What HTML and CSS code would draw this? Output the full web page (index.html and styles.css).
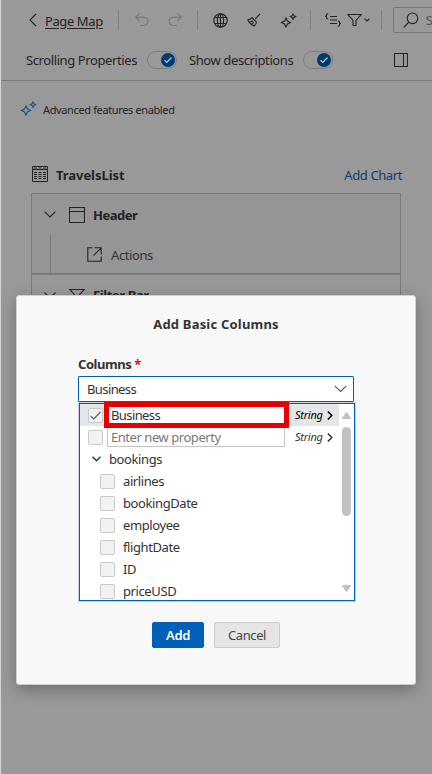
FILE: index.html
```html
<!DOCTYPE html>
<html lang="en">
<head>
<meta charset="utf-8">
<title>Page Map</title>
<link rel="stylesheet" href="styles.css">
</head>
<body>
<div class="app">
  <header class="toolbar">
    <svg class="back" width="8" height="14" viewBox="0 0 8 14"><path d="M7 1 1 7l6 6"/></svg>
    <a class="map-link">Page Map</a>
    <i class="sep"></i>
    <svg class="undo faded" width="14" height="14" viewBox="0 0 14 14"><path d="M4.5.5.8 4.2l3.7 3.7M1 4.2h7.8a3.9 3.9 0 1 1 0 8.3H5"/></svg>
    <svg class="redo faded" width="14" height="14" viewBox="0 0 14 14"><path d="m9.5.5 3.7 3.7-3.7 3.7M13 4.2H5.2a3.9 3.9 0 1 0 0 8.3H9"/></svg>
    <i class="sep sep-2"></i>
    <svg class="globe" width="15" height="15" viewBox="0 0 15 15"><circle cx="7.5" cy="7.5" r="6.7"/><ellipse cx="7.5" cy="7.5" rx="3.1" ry="6.7"/><path d="M1.500 4.500h12M1.500 10.500h12M7.500.8v13.400"/></svg>
    <svg class="broom" width="14" height="14" viewBox="0 0 14 14"><path d="M13 1 8.2 5.8M5 4.5l4.5 4.7M5 4.5C4.3 6 3 6.5.8 6.8 2 9.7 4.2 11.900 7.2 13 8 12 9.500 10.500 9.500 9.200M2.500 9l3.700-1.200M4.500 11.300l2.300-2.100"/></svg>
    <svg class="spark" width="17" height="15" viewBox="0 0 17 15"><path d="M6 5 7.500 8 10.500 9.500 7.500 11 6 14 4.500 11 1.500 9.500 4.500 8ZM13 1l.9 1.700 1.700.9-1.700.9-.9 1.700-.9-1.700-1.700-.9 1.700-.9Z"/></svg>
    <i class="sep sep-3"></i>
    <svg class="lines" width="16" height="14" viewBox="0 0 16 14"><path d="M3.200.800h-.700Q1.500.800 1.500 2v.500L.500 3.200l1 .8v.700q0 1.100 1 1.100h.700M5 3.500h7M5 7h7M5 10.500h7M12.800 8h.700q1 0 1 1.100v.800l1 .8-1 .7v.700q0 1.100-1 1.100h-.7"/></svg>
    <svg class="funnel" width="15" height="14" viewBox="0 0 15 14"><path d="M.8 1.500h13.400L9 7.500v5H6v-5Z"/></svg>
    <svg class="mini" width="6" height="4" viewBox="0 0 6 4"><path d="m.5.700 2.500 2.300L5.500.7"/></svg>
    <i class="sep sep-4"></i>
    <div class="search">
      <svg width="16" height="17" viewBox="0 0 16 17"><circle cx="9.500" cy="6.300" r="5.300"/><path d="M5.600 10.300.7 15.500"/></svg>
      <span>Search</span>
    </div>
  </header>
  <div class="options">
    <span class="opt opt-a">Scrolling Properties</span>
    <span class="toggle"><b><svg width="14" height="14" viewBox="0 0 14 14"><path d="m3.500 7.200 2.200 2.200 4.800-4.900"/></svg></b></span>
    <span class="opt opt-b">Show descriptions</span>
    <span class="toggle"><b><svg width="14" height="14" viewBox="0 0 14 14"><path d="m3.500 7.200 2.200 2.200 4.800-4.900"/></svg></b></span>
    <svg class="panel" width="14" height="14" viewBox="0 0 14 14"><path d="M.5.500h13v13H.500ZM9.500.500v13"/></svg>
  </div>
  <div class="banner">
    <svg width="17" height="15" viewBox="0 0 17 15"><path d="M6 5 7.500 8 10.500 9.500 7.500 11 6 14 4.500 11 1.500 9.500 4.500 8ZM13 1l.9 1.700 1.700.9-1.700.9-.9 1.700-.9-1.700-1.700-.9 1.700-.9Z"/></svg>
    <span>Advanced features enabled</span>
  </div>
  <div class="heading">
    <svg width="16" height="16" viewBox="0 0 16 16"><path d="M.5.500h15v15H.500ZM.5 3.500h15M2 2h3M6.500 2h3M11 2h3M2 6.500h3M6.500 6.500h3M11 6.500h3M2 8.500h3M6.500 8.500h3M11 8.500h3M2 10.500h3M6.500 10.500h3M11 10.500h3M2 12.500h3M6.500 12.500h3M11 12.500h3"/></svg>
    <strong>TravelsList</strong>
    <a class="chart">Add Chart</a>
  </div>
  <section class="tree">
    <div class="node">
      <svg width="12" height="7" viewBox="0 0 12 7"><path d="m.5.600 5.500 5.400L11.500.6"/></svg>
      <svg class="node-icon" width="16" height="16" viewBox="0 0 16 16"><path d="M.5.500h15v15H.500ZM.5 4.500h15"/></svg>
      <strong class="header-label">Header</strong>
    </div>
    <div class="child">
      <svg width="15" height="15" viewBox="0 0 15 15"><path d="M5.500.800H.800v13.400h13.400V9.500M7.500.800h6.700v6.700M14.200.800 6.700 8.300"/></svg>
      <span>Actions</span>
    </div>
    <div class="node node-2">
      <svg width="12" height="7" viewBox="0 0 12 7"><path d="m.5.600 5.500 5.400L11.500.6"/></svg>
      <svg class="node-icon" width="16" height="16" viewBox="0 0 16 16"><path d="M1 2.500h14L9.500 9v6h-3V9Z"/></svg>
      <strong class="filter-label">Filter Bar</strong>
    </div>
  </section>
</div>
<div class="dialog">
  <h1>Add Basic Columns</h1>
  <div class="label"><span>Columns</span> <em>*</em></div>
  <div class="combo"><span class="value">Business</span><svg width="13" height="8" viewBox="0 0 13 8"><path d="m.7.800 5.800 5.600L12.300.8"/></svg></div>
  <div class="list">
    <div class="rows">
      <div class="row picked">
        <i class="box"><svg width="13" height="13" viewBox="0 0 13 13"><path d="m1.500 6.800 3.200 3.200 6.800-7"/></svg></i>
        <span class="field marked"><span class="value">Business</span></span>
        <em>String</em><svg class="next" width="6" height="9" viewBox="0 0 6 9"><path d="m.8.500 4 4-4 4"/></svg>
      </div>
      <div class="row">
        <i class="box"></i>
        <span class="field"><span class="hint">Enter new property</span></span>
        <em>String</em><svg class="next" width="6" height="9" viewBox="0 0 6 9"><path d="m.8.500 4 4-4 4"/></svg>
      </div>
      <div class="row group"><svg width="9" height="6" viewBox="0 0 9 6"><path d="m.5.700 4 4 4-4"/></svg><span>bookings</span></div>
      <div class="row item"><i class="box"></i><span>airlines</span></div>
      <div class="row item"><i class="box"></i><span>bookingDate</span></div>
      <div class="row item"><i class="box"></i><span>employee</span></div>
      <div class="row item"><i class="box"></i><span>flightDate</span></div>
      <div class="row item"><i class="box"></i><span>ID</span></div>
      <div class="row item"><i class="box"></i><span>priceUSD</span></div>
    </div>
    <div class="scroll">
      <svg width="9" height="7" viewBox="0 0 9 7"><path d="M4.500 0Q5 0 9 6.200V7H0v-.800Q4 0 4.500 0Z"/></svg>
      <i class="thumb"></i>
      <svg class="down" width="9" height="7" viewBox="0 0 9 7"><path d="M4.500 7Q5 7 9 .800V0H0v.800Q4 7 4.500 7Z"/></svg>
    </div>
  </div>
  <div class="actions"><span class="btn primary">Add</span><span class="btn">Cancel</span></div>
</div>
</body>
</html>
```
FILE: styles.css
```css
* { box-sizing: border-box; }
body {
  margin: 0;
  width: 432px;
  height: 774px;
  overflow: hidden;
  position: relative;
  background: #999;
  color: #242424;
  font: 13px/18px "Noto Sans", "Open Sans", sans-serif;
  letter-spacing: -0.4px;
  white-space: nowrap;
}
svg { display: block; flex: none; fill: none; stroke: currentColor; stroke-width: 1.1; }
i { display: block; flex: none; font-style: normal; }
.app { height: 774px; border-left: 1px solid #d5d5d5; overflow: hidden; }
.toolbar { display: flex; align-items: center; height: 40px; padding-left: 28px; }
.map-link { width: 58px; margin: 2px 0 0 8px; text-decoration: underline; text-underline-offset: 2px; }
.sep { flex: none; width: 1px; height: 20px; margin-left: 15px; background: #808080; }
.faded { color: #777; }
.undo { margin-left: 16px; }
.redo { margin-left: 19px; }
.sep-2 { margin-left: 15px; }
.globe { margin-left: 15px; }
.broom { margin-left: 19px; }
.spark { margin-left: 19px; }
.sep-3 { margin-left: 13px; }
.lines { margin-left: 14px; }
.funnel { margin-left: 6px; }
.mini { margin-left: 2px; }
.sep-4 { margin-left: 11px; }
.search {
  display: flex; align-items: center; flex: none; width: 90px; height: 26px;
  margin-left: 11px; padding-left: 9px; border: 1px solid #777; border-radius: 2px;
  color: #555;
}
.search svg { color: #222; margin-right: 7px; }
.options { display: flex; align-items: center; height: 41px; padding-left: 25px; border-bottom: 1px solid #7b7b7b; }
.opt-a { width: 121px; }
.opt-b { width: 114px; margin-left: 12px; }
.toggle { flex: none; display: flex; align-items: center; justify-content: flex-end; width: 30px; height: 18px; padding-right: 1px; border: 1px solid #7c7c7c; border-radius: 9px; }
.toggle b { width: 14px; height: 14px; border-radius: 50%; background: #003b70; color: #c4cfda; }
.panel { margin-left: 61px; }
.banner { display: flex; align-items: center; height: 18px; margin: 20px 0 0 19px; font-size: 11px; letter-spacing: -.37px; }
.banner svg { color: #174f91; margin: -3px 6px 0 0; }
.heading { display: flex; align-items: center; height: 20px; margin: 46px 30px 0 31px; }
.heading strong { margin-left: 8px; letter-spacing: -.05px; }
.heading svg { stroke-width: 1; margin-top: -2px; }
.chart { margin-left: auto; color: #0b3d70; }
.tree { width: 370px; height: 420px; margin: 8px 0 0 30px; border: 1px solid #7b7b7b; background: linear-gradient(#959595 79px, #999 79px); }
.node { display: flex; align-items: center; height: 41px; padding-left: 12px; }
.header-label { letter-spacing: -.5px; }
.node-icon { margin: 0 8px 0 13px; }
.child { display: flex; align-items: center; height: 38px; padding-top: 1px; margin-left: 18px; padding-left: 36px; border-left: 1px solid #7b7b7b; color: #333; }
.child svg { margin-right: 9px; color: #222; }
.node-2 { height: 42px; border-top: 2px solid #7b7b7b; }
.dialog {
  position: absolute; left: 16px; top: 295px; width: 400px; height: 390px;
  padding: 19px 62px 0; border: 1px solid #d0d0d0; border-radius: 3px; background: #f8f8f8;
  box-shadow: 0 5px 16px rgba(0,0,0,.28); color: #333;
}
h1 { margin: 0; font-size: 13px; line-height: 18px; text-align: center; letter-spacing: .2px; }
.label { margin: 22px 0 0 -1px; height: 18px; font-weight: 700; letter-spacing: -.45px; }
.label em { color: #b3251e; font-style: normal; }
.combo { display: flex; align-items: center; justify-content: space-between; width: 276px; height: 26px; margin: 3px 0 0 -1px; padding: 0 6px 0 8px; border: 1px solid #0060b8; border-radius: 1px; background: #fff; }
.combo svg { color: #555; }
.value { letter-spacing: -.6px; }
.list { position: relative; display: flex; width: 276px; height: 198px; margin-top: 1px; border: 1px solid #0060b8; box-shadow: 0 0 0 1px #c4d0dc; background: #fff; }
.rows { width: 259px; }
.row { display: flex; align-items: center; width: 259px; height: 22px; padding-left: 8px; }
.picked { background: #e6e6e6; color: #000; position: relative; z-index: 1; }
.box { width: 15px; height: 15px; border: 1px solid #c9c9c9; border-radius: 2px; background: #f2f2f2; color: #3d5f80; }
.field { flex: none; width: 178px; height: 20px; margin-left: 4px; padding-left: 3px; border: 1px solid #c4c4c4; border-radius: 1px; line-height: 18px; background: #fff; color: #333; }
.marked { width: 185px; height: 26px; margin: 0 -4px 0 1px; padding-left: 2px; border: 5px solid #e60000; border-radius: 0; line-height: 16px; }
.hint { color: #777; letter-spacing: -.45px; }
.row em { width: 32px; margin-left: 10px; font-size: 11px; letter-spacing: -.25px; }
.next { stroke-width: 1.5; margin-left: 0; }
.group { padding-left: 12px; }
.group span { margin-left: 8px; }
.group svg { stroke-width: 1.4; }
.item { padding-left: 20px; }
.item span { margin-left: 8px; }
.scroll { display: flex; flex-direction: column; align-items: center; margin-left: 3px; padding-top: 8px; width: 9px; color: #c1c1c1; }
.scroll svg { fill: currentColor; stroke: none; }
.thumb { width: 9px; height: 89px; margin-top: 8px; border-radius: 5px; background: #c1c1c1; }
.down { margin-top: 69px; }
.actions { display: flex; gap: 10px; margin: 21px 0 0 73px; }
.btn { width: 66px; height: 26px; border: 1px solid #ccc; border-radius: 2px; background: #e5e5e5; line-height: 25px; text-align: center; color: #444; }
.primary { width: 52px; border-color: #0060b8; background: #0060b8; color: #fff; font-weight: 600; }
```
